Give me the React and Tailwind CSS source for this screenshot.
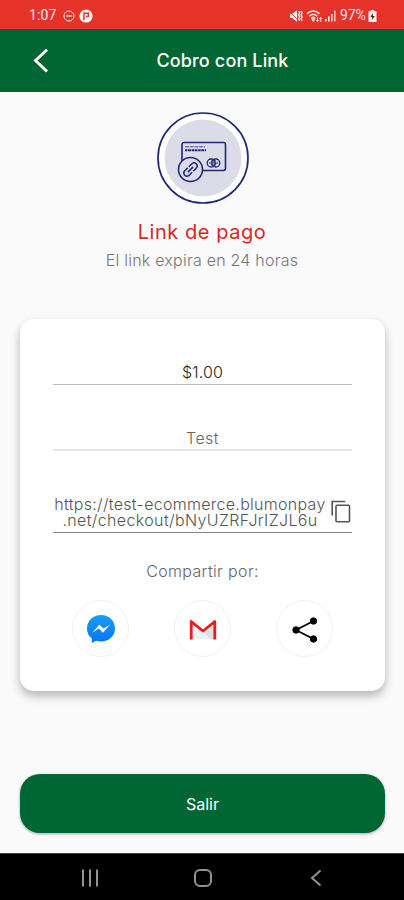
import React from "react";

function StatusBar() {
  return (
    <div className="flex h-[29px] shrink-0 items-center justify-between bg-[#e6332a] pl-[29px] pr-[27px] pt-[2px] font-['Roboto',sans-serif] text-[14px] text-[#ffe9e6]">
      <div className="flex items-center">
        <span className="w-[34px] tracking-[0.15px]">1:07</span>
        <svg className="h-3 w-3" viewBox="0 0 12 12" fill="none" stroke="currentColor">
          <circle cx="6" cy="6" r="5" />
          <path d="M3.3 6h5.4" strokeWidth="1.3" />
        </svg>
        <svg className="ml-[4px] h-[14px] w-[14px]" viewBox="0 0 14 14">
          <circle cx="7" cy="7" r="6.6" fill="#fff5f3" />
          <path d="M5 11V4.300h4.300v3.200H7.200" fill="none" stroke="#e6332a" strokeWidth="1.500" />
        </svg>
      </div>
      <div className="flex items-center">
        <svg className="h-[14px] w-[14px]" viewBox="0 0 14 14" fill="none" stroke="currentColor">
          <path d="M1 4.800h2.200L8 1.300v11.400L3.200 9H1z" fill="#fff5f3" stroke="none" />
          <path d="M.5 2.200l8 8.500" stroke="#e6332a" strokeWidth="1" />
          <path d="M9.500 2l1.200 1.800-1.200 2 1.200 2-1.200 2 1.200 2M12 2l1.200 1.800-1.200 2 1.200 2-1.200 2 1.200 2" strokeWidth="1.300" />
        </svg>
        <svg className="ml-[3px] h-[14px] w-[17px]" viewBox="0 0 17 14" fill="none" stroke="currentColor" strokeWidth="1.5">
          <path d="M1 4.800c3.500-3.700 9-3.700 12.500 0M3.200 7.200c2.400-2.300 5.700-2.300 8.100 0M5.300 9.300c1.200-1.100 2.700-1.100 3.900 0" />
          <path d="M6.200 10l1 1.800 1-1.800z" fill="currentColor" />
          <path d="M11.500 8v4.500M10 11l1.500 1.700L13 11M14.700 12.800V8.500M13.200 10l1.500-1.700 1.500 1.700" strokeWidth=".9" />
        </svg>
        <svg className="ml-[2px] h-[13px] w-[11px]" viewBox="0 0 11 13" fill="currentColor">
          <path d="M0 10h1.600v2.500H0zM3 7.500h1.600v5H3zM6 5h1.600v7.500H6z" />
          <path d="M9 1.500h1.600v11H9z" opacity=".75" />
        </svg>
        <span className="ml-[4px] w-[28px] tracking-[-0.1px]">97%</span>
        <svg className="h-[14px] w-[9px]" viewBox="0 0 8 14">
          <path d="M2.300 1h3.400v1.300H8V13H0V2.300h2.300z" fill="#fff5f3" />
          <path d="M4.700 4L1.800 8h2L3.300 11.200l3-4.200h-2z" fill="#66150f" />
        </svg>
      </div>
    </div>
  );
}

function Header() {
  return (
    <header className="grid h-[63px] shrink-0 grid-cols-[58px_1fr_17px] items-center bg-[#006633] text-white">
      <svg className="ml-[32px] mt-[-2px] h-[26px] w-[18px]" viewBox="0 0 18 26" fill="none" stroke="currentColor" strokeWidth="2.900">
        <path d="M15 2.800L3.500 13.500 15 24.500" />
      </svg>
      <h1 className="pb-[1px] text-center text-[18px] font-medium tracking-[0.15px]">Cobro con Link</h1>
    </header>
  );
}

function CardLinkIcon() {
  return (
    <svg className="ml-px h-[92px] w-[92px]" viewBox="0 0 92 92" fill="none" stroke="#20287a">
      <circle cx="46" cy="46" r="45" fill="#fff" strokeWidth="1.700" />
      <circle cx="46" cy="46" r="38.500" fill="#dcdce9" stroke="none" />
      <rect x="25" y="30.500" width="43.500" height="28" rx="2.200" strokeWidth="1.600" />
      <path d="M28 34.800h20" strokeWidth=".8" strokeDasharray="4 .7" />
      <path d="M28 38.300h21" strokeWidth="2.100" strokeDasharray="2.500 .5 3 .6" />
      <circle cx="54.200" cy="51" r="4" strokeWidth="1.300" />
      <circle cx="58.800" cy="51" r="4" strokeWidth="1.300" />
      <path d="M52 51h9M54 49h5M54 53h5" strokeWidth="1" />
      <circle cx="33.500" cy="57.500" r="12" fill="#dcdce9" strokeWidth="1.600" />
      <g transform="rotate(-45 33.500 57.500)" strokeWidth="1.500">
        <path d="M32.700 54.400h-4.200a3.100 3.100 0 0 0 0 6.200h4.200M34.300 54.400h4.200a3.100 3.100 0 0 1 0 6.200h-4.200M29.800 57.500h7.400" />
      </g>
    </svg>
  );
}

function ShareButton({ label, children }) {
  return (
    <button aria-label={label} className="flex h-[57px] w-[57px] items-center justify-center rounded-full border-[1.5px] border-[#f0f0f0] bg-white">
      {children}
    </button>
  );
}

function PaymentCard() {
  return (
    <section className="mx-[20px] mt-[46px] flex h-[372px] w-[365px] shrink-0 flex-col rounded-[14px] bg-white px-[33px] text-[16px] font-light text-[#555] shadow-[0_5px_10px_rgba(0,0,0,0.28)]">
      <div className="flex h-[66px] items-end justify-center border-b border-[#bdbdbd] text-[#222]">
        <span className="tracking-[0.15px]">$1.00</span>
      </div>
      <div className="flex h-[66px] items-end justify-center border-b-2 border-[#e5e5e5] text-[#666]">
        <span className="relative top-px tracking-[0.4px]">Test</span>
      </div>
      <div className="flex h-[82px] items-end border-b border-[#858585] pb-[4px]">
        <div className="flex w-[274px] flex-col items-center whitespace-nowrap leading-[16px]">
          <span className="tracking-[0.29px]">https://test-ecommerce.blumonpay</span>
          <span className="tracking-[0.36px]">.net/checkout/bNyUZRFJrIZJL6u</span>
        </div>
        <svg className="mb-[4px] ml-[4px] h-[24px] w-[20px] shrink-0" viewBox="0 0 20 24" fill="none" stroke="#555" strokeWidth="1.600">
          <path d="M1.200 15.500V1.500h13" />
          <rect x="5" y="5.300" width="13.500" height="16.500" rx="1" />
        </svg>
      </div>
      <p className="mt-[26px] text-center leading-[24px] tracking-[0.35px] text-[#666]">Compartir por:</p>
      <div className="mt-[17px] flex justify-between px-[19px]">
        <ShareButton label="Messenger">
          <svg className="h-[30px] w-[30px]" viewBox="0 0 30 30">
            <defs>
              <linearGradient id="messenger" x2="0" y2="1">
                <stop stopColor="#169eff" />
                <stop offset="1" stopColor="#0874f5" />
              </linearGradient>
            </defs>
            <path d="M15 1C7.200 1 1 6.800 1 14.500c0 4.200 1.800 7.600 4.800 10V29l4.300-2.300c1.600.5 3.200.7 4.900.7 7.800 0 14-5.400 14-13S22.800 1 15 1z" fill="url(#messenger)" />
            <path d="M6.200 18.700l7.200-8.300 4 4.200 6.800-4.200-7.300 8.300-3.900-4.200z" fill="#fff" />
          </svg>
        </ShareButton>
        <ShareButton label="Gmail">
          <svg className="mt-[2px] h-[22px] w-[28px]" viewBox="0 0 28 22">
            <path d="M2 3l12 9.500L26 3v17H2z" fill="#f0f1f2" />
            <path d="M14 12.500L26 4v16h-5z" fill="#dce3e7" />
            <path d="M2.200 20.500V2.500L14 12 25.800 2.500v18" fill="none" stroke="#ed1c1c" strokeWidth="2.800" strokeLinejoin="round" />
          </svg>
        </ShareButton>
        <ShareButton label="Compartir">
          <svg className="mt-[2px] h-[28px] w-[28px]" viewBox="0 0 28 28" fill="#000" stroke="#000">
            <path d="M22.500 5L5 14l17.500 9" fill="none" strokeWidth="1.700" />
            <circle cx="22.500" cy="5" r="3.200" />
            <circle cx="5" cy="14" r="3.200" />
            <circle cx="22.500" cy="23" r="3.200" />
          </svg>
        </ShareButton>
      </div>
    </section>
  );
}

function NavigationBar() {
  return (
    <nav className="grid h-[47px] shrink-0 grid-cols-3 items-center justify-items-center border-t border-[#444] bg-black px-[33px] pt-[2px] text-[#929292]">
      <svg className="ml-[2px] h-[18px] w-[18px]" viewBox="0 0 18 18" fill="none" stroke="currentColor" strokeWidth="2">
        <path d="M2 .5v17M9 .5v17M16 .5v17" />
      </svg>
      <svg className="ml-[2px] h-[20px] w-[20px]" viewBox="0 0 20 20" fill="none" stroke="currentColor" strokeWidth="2">
        <rect x="2" y="2" width="16" height="16" rx="5" />
      </svg>
      <svg className="ml-[2px] h-[18px] w-[12px]" viewBox="0 0 12 18" fill="none" stroke="currentColor" strokeWidth="2">
        <path d="M10.500 1.500L2 9l8.500 7.500" />
      </svg>
    </nav>
  );
}

export default function App() {
  return (
    <div className="flex h-[900px] w-[404px] flex-col overflow-hidden bg-[#fafafa] font-['Inter',sans-serif]">
      <StatusBar />
      <Header />
      <main className="flex flex-1 flex-col">
        <div className="flex flex-col items-center pt-[20px]">
          <CardLinkIcon />
          <h2 className="mt-[13px] text-[20px] leading-[30px] tracking-[0.55px] text-[#dc241f]">Link de pago</h2>
          <p className="mt-[1px] text-[16px] font-light leading-[24px] tracking-[0.23px] text-[#777]">El link expira en 24 horas</p>
        </div>
        <div className="pt-[1px]">
          <PaymentCard />
        </div>
        <button className="mx-[20px] mt-[83px] h-[59px] w-[365px] rounded-[20px] bg-[#006633] text-[16px] text-white shadow-[0_1px_3px_rgba(0,0,0,0.35)]">Salir</button>
      </main>
      <NavigationBar />
    </div>
  );
}
